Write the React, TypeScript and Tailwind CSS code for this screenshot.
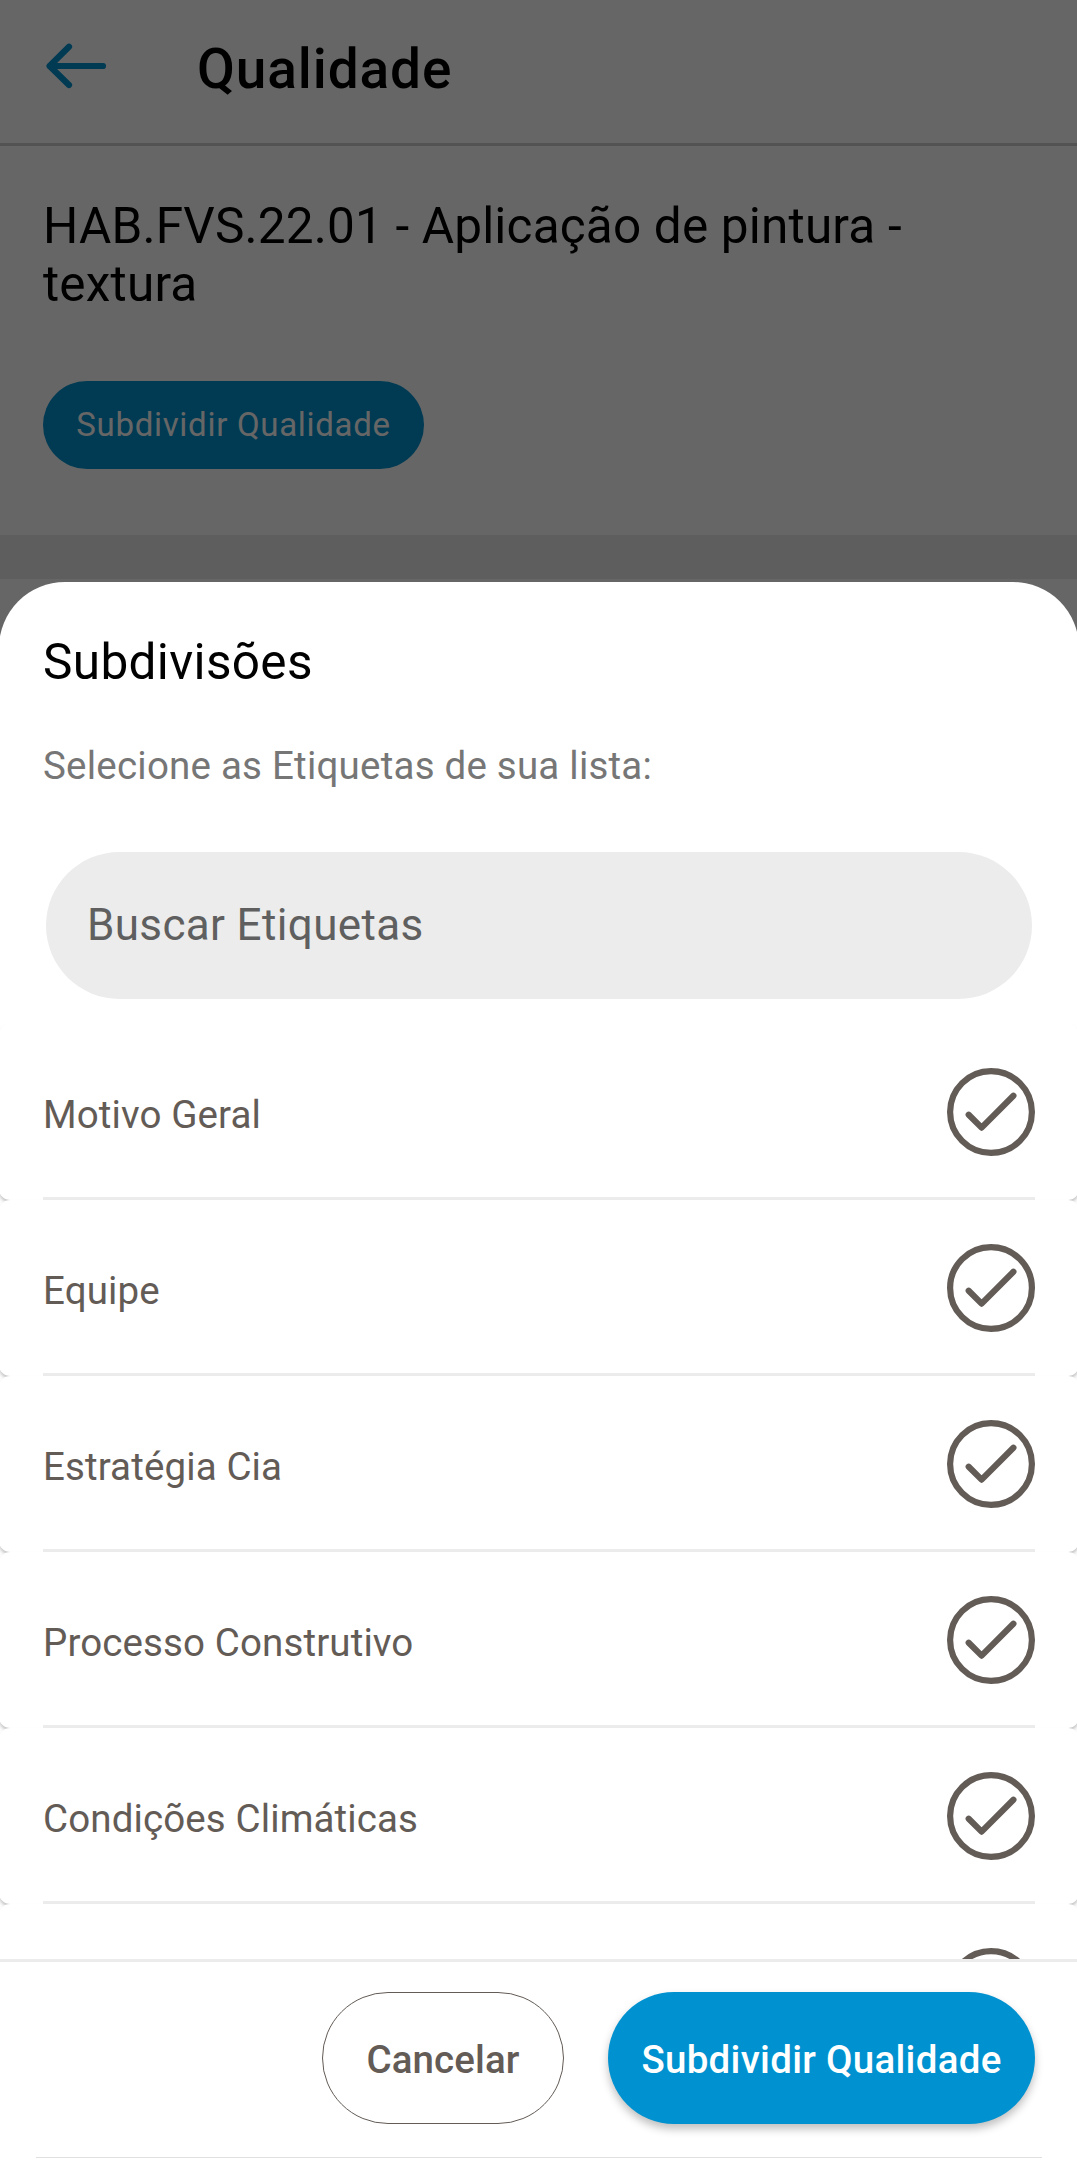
import { FC } from "react";

interface Etiqueta {
  id: number;
  name: string;
}

const ETIQUETAS: Etiqueta[] = [
  { id: 1, name: "Motivo Geral" },
  { id: 2, name: "Equipe" },
  { id: 3, name: "Estratégia Cia" },
  { id: 4, name: "Processo Construtivo" },
  { id: 5, name: "Condições Climáticas" },
  { id: 6, name: "" },
];

const BackArrow: FC = () => (
  <svg
    className="mt-[43px] ml-[47px] h-[46px] w-[62px] shrink-0"
    viewBox="0 0 62 46"
    fill="none"
    stroke="#0092d0"
    strokeWidth="6.2"
    strokeLinecap="round"
    strokeLinejoin="round"
  >
    <path d="M57 23H3.6M23 3.8L3.6 23L23 42" />
  </svg>
);

const CheckCircle: FC = () => (
  <svg
    className="h-[88px] w-[88px] shrink-0"
    viewBox="0 0 88 88"
    fill="none"
    stroke="#635b56"
    strokeWidth="6.2"
    strokeLinecap="round"
    strokeLinejoin="round"
  >
    <circle cx="44" cy="44" r="40.9" />
    <path d="M21.7 46.8L34.6 59.6L66.4 27.8" />
  </svg>
);

const EtiquetaRow: FC<{ etiqueta: Etiqueta }> = ({ etiqueta }) => (
  <li className="h-44 shrink-0 rounded-[11px] bg-white px-11 shadow-[0_3px_4px_-1px_rgba(0,0,0,0.35)]">
    <div className="flex h-full items-center justify-between border-b-[3px] border-[#ececec] pt-[3px]">
      <span className="pt-[5px] text-[38.5px] leading-[45px] tracking-[0.12px] text-[#635b56]">
        {etiqueta.name}
      </span>
      <CheckCircle />
    </div>
  </li>
);

// Page that stays behind the bottom sheet
const QualityPage: FC = () => (
  <div className="flex h-full flex-col bg-white text-black">
    <header className="flex h-[146px] items-start border-b-[3px] border-[#cfcfcf]">
      <BackArrow />
      <h1 className="mt-[37px] ml-[89px] text-[55px] leading-16 font-medium tracking-[0.9px]">
        Qualidade
      </h1>
    </header>

    <section className="px-11 pt-[51px] pb-[66px]">
      <h2 className="w-[940px] text-[49.5px] leading-[58px] tracking-[0.18px]">
        HAB.FVS.22.01 - Aplicação de pintura - textura
      </h2>
      <button className="mt-[68px] flex h-[88px] w-[381px] items-center justify-center rounded-full bg-[#0092d0] pb-px text-[33px] leading-[39px] tracking-[0.7px] text-white">
        Subdividir Qualidade
      </button>
    </section>

    <div className="h-11 bg-[#ececec]" />
  </div>
);

const SubdivisionSheet: FC = () => (
  <div className="absolute inset-x-0 bottom-0 flex h-[1599px] flex-col overflow-hidden rounded-t-[66px] bg-white">
    <div className="px-11 pt-[51px]">
      <h2 className="text-[49.5px] leading-[58px] tracking-[0.35px] text-black">
        Subdivisões
      </h2>
      <p className="mt-[52px] text-[38.5px] leading-[45px] tracking-[0.22px] text-[#767676]">
        Selecione as Etiquetas de sua lista:
      </p>
    </div>

    {/* SEARCH */}
    <div className="mx-[47px] mt-16 flex h-[147px] shrink-0 items-center rounded-full bg-[#ececec] px-[41px] pb-[2px]">
      <span className="text-[44px] leading-[52px] tracking-[0.35px] text-[#5f5f5f]">
        Buscar Etiquetas
      </span>
    </div>

    {/* LIST */}
    <ul className="mt-[25px] flex min-h-0 flex-1 flex-col overflow-hidden">
      {ETIQUETAS.map((etiqueta) => (
        <EtiquetaRow key={etiqueta.id} etiqueta={etiqueta} />
      ))}
    </ul>

    {/* ACTIONS */}
    <footer className="h-[222px] shrink-0 border-t-[3px] border-[#ececec] bg-white pt-[30px]">
      <div className="flex justify-end gap-11 px-11">
        <button className="flex h-[132px] w-[242px] items-center justify-center rounded-full border border-[#635b56] pt-[3px] text-[38.5px] leading-[45px] font-medium tracking-[0.12px] text-[#635b56]">
          Cancelar
        </button>
        <button className="flex h-[132px] w-[427px] items-center justify-center rounded-full bg-[#0092d0] pt-[3px] text-[38.5px] leading-[45px] font-medium tracking-[0.28px] text-white shadow-[0_5px_8px_rgba(0,0,0,0.25)]">
          Subdividir Qualidade
        </button>
      </div>
      <div className="mx-[37px] mt-[33px] h-px bg-[#e0e0e0]" />
    </footer>
  </div>
);

export default function App() {
  return (
    <div className="h-[2181px] w-[1077px] overflow-hidden font-['Roboto',sans-serif]">
      <div className="relative -ml-px h-full w-[1080px]">
        <QualityPage />
        <div className="absolute inset-0 bg-black/60" />
        <SubdivisionSheet />
      </div>
    </div>
  );
}
